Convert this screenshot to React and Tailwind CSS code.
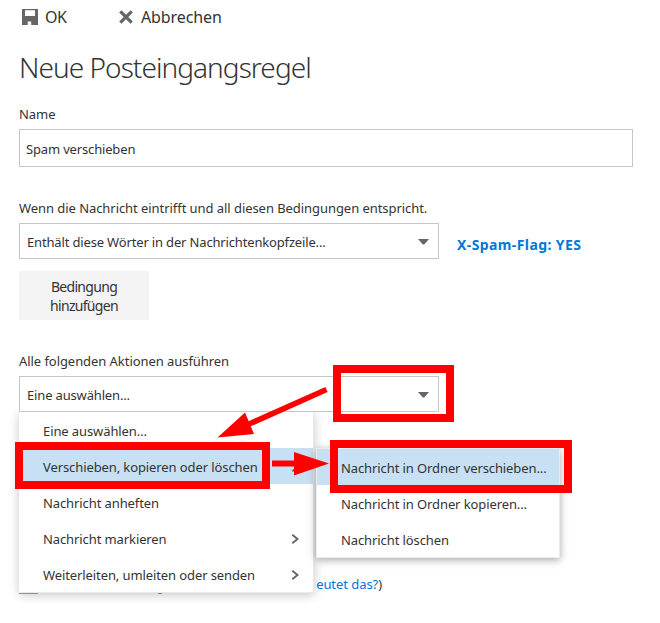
import React from 'react';

const SaveIcon = () => (
  <svg width="16" height="16" viewBox="0 0 16 16" className="block shrink-0">
    <path fillRule="evenodd" fill="#666666" d="M0 0H16V16H0Z M3 1.300V7H13V1.300Z M5.700 12.500V16H9.200V12.500Z" />
  </svg>
);

const CancelIcon = () => (
  <svg width="14" height="14" viewBox="0 0 14 14" className="block shrink-0">
    <path d="M1.300 1.300L12.700 12.700M12.700 1.300L1.300 12.700" stroke="#666666" strokeWidth="3.200" />
  </svg>
);

const Caret = () => (
  <svg width="11" height="6" viewBox="0 0 11 6" className="mt-px block shrink-0">
    <path d="M0 0H11L6.200 5.600H4.800Z" fill="#666666" />
  </svg>
);

const Chevron = () => (
  <svg width="8" height="10" viewBox="0 0 8 10" className="mt-px block shrink-0">
    <path d="M1.300 0.800L6.500 5L1.300 9.200" fill="none" stroke="#666666" strokeWidth="1.900" />
  </svg>
);

const SelectBox = ({ value }) => (
  <div className="relative z-10 flex h-9 w-[420px] items-center justify-between border border-[#c6c6c6] bg-white pr-[9px] pl-[7px]">
    <span className="pt-[3px] text-[13px] tracking-[-0.16px]">{value}</span>
    <Caret />
  </div>
);

const MenuItem = ({ label, active, submenu }) => (
  <div className={`flex h-9 items-center justify-between pr-3.5 pl-6 whitespace-nowrap ${active ? 'bg-[#c7e0f4]' : ''}`}>
    <span className="pt-[3px] text-[13px] tracking-[-0.1px]">{label}</span>
    {submenu && <Chevron />}
  </div>
);

const actions = [
  { label: 'Eine auswählen...' },
  { label: 'Verschieben, kopieren oder löschen', active: true, submenu: true },
  { label: 'Nachricht anheften' },
  { label: 'Nachricht markieren', submenu: true },
  { label: 'Weiterleiten, umleiten oder senden', submenu: true },
];

const folderActions = [
  { label: 'Nachricht in Ordner verschieben...', active: true },
  { label: 'Nachricht in Ordner kopieren...' },
  { label: 'Nachricht löschen' },
];

const Highlights = () => (
  <>
    <div className="absolute top-[365px] left-[333px] z-20 h-[57px] w-[121px] border-8 border-[#ff0000]" />
    <div className="absolute top-[442px] left-[15px] z-20 h-[47px] w-[255px] border-8 border-[#ff0000]" />
    <div className="absolute top-[440px] left-[330px] z-20 h-[53px] w-[242px] border-8 border-[#ff0000]" />
    <svg width="120" height="100" viewBox="215 380 120 100" className="absolute top-[380px] left-[215px] z-20">
      <path d="M326.500 389.500L248 424.500" stroke="#ff0000" strokeWidth="5.600" />
      <path d="M217.500 437.500L245 412.500L254 434Z" fill="#ff0000" />
      <path d="M272 463.500H296" stroke="#ff0000" strokeWidth="6" />
      <path d="M294 452V475.500L329 463.500Z" fill="#ff0000" />
    </svg>
  </>
);

const App = () => {
  return (
    <div className="relative h-[623px] w-[660px] overflow-hidden bg-white pl-[19px] font-['Noto_Sans',sans-serif] text-[13px] tracking-[-0.06px] text-[#333333]">
      <div className="flex h-[34px] items-center text-base">
        <div className="flex w-[100px] items-center gap-[7px] pl-[3px]">
          <SaveIcon />
          <span className="tracking-[-0.5px]">OK</span>
        </div>
        <div className="flex items-center gap-2">
          <CancelIcon />
          <span className="tracking-[-0.1px]">Abbrechen</span>
        </div>
      </div>

      <h1 className="flex h-[66px] items-center text-[28px] font-light tracking-[-0.95px]">Neue Posteingangsregel</h1>

      <label className="flex h-[29px] items-center">Name</label>
      <div className="flex h-[38px] w-[614px] items-center border border-[#c6c6c6] pt-[3px] pl-1.5 tracking-[-0.16px]">
        Spam verschieben
      </div>

      <div className="mt-[27px] flex h-[29px] items-center">Wenn die Nachricht eintrifft und all diesen Bedingungen entspricht.</div>
      <div className="flex items-center gap-[18px]">
        <SelectBox value="Enthält diese Wörter in der Nachrichtenkopfzeile..." />
        <span className="pt-[7px] text-sm font-bold tracking-[0.4px] text-[#0078d7]">X-Spam-Flag: YES</span>
      </div>
      <button className="mt-3 flex h-[49px] w-[130px] items-center justify-center bg-[#f4f4f4] px-6 text-sm leading-[19px] tracking-[-0.7px]">
        Bedingung hinzufügen
      </button>

      <div className="mt-[27px] flex h-[29px] items-center">Alle folgenden Aktionen ausführen</div>
      <SelectBox value="Eine auswählen..." />

      {/* mostly hidden behind the open menu */}
      <div className="mt-[163px] flex h-[19px] w-[363px] items-start justify-between">
        <span className="h-[19px] w-[19px] border border-[#a6a6a6]" />
        <span className="ml-[120px] h-[19px] w-1 border-b border-[#999999]" />
        <span className="ml-auto leading-[19px]">
          <span className="text-[#0078d7]">eutet das?</span>)
        </span>
      </div>

      <div className="absolute top-[412px] left-[19px] w-[295px] border-r border-b border-[#eaeaea] bg-white shadow-[0_2px_10px_rgba(0,0,0,0.22)]">
        {actions.map((item) => (
          <MenuItem key={item.label} {...item} />
        ))}
      </div>

      <div className="absolute top-[448px] left-[316px] w-[244px] border border-[#eaeaea] bg-white shadow-[0_2px_8px_rgba(0,0,0,0.35)]">
        {folderActions.map((item) => (
          <MenuItem key={item.label} {...item} />
        ))}
      </div>

      <Highlights />
    </div>
  );
};

export default App;
